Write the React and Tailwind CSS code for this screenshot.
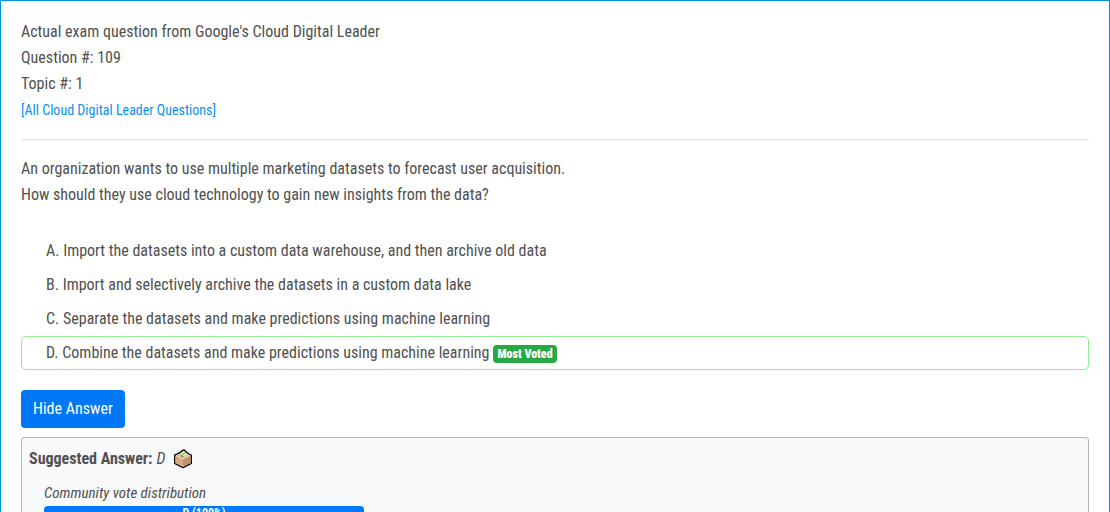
const choices = [
  { letter: 'A', text: 'Import the datasets into a custom data warehouse, and then archive old data' },
  { letter: 'B', text: 'Import and selectively archive the datasets in a custom data lake' },
  { letter: 'C', text: 'Separate the datasets and make predictions using machine learning' },
  { letter: 'D', text: 'Combine the datasets and make predictions using machine learning', mostVoted: true },
];

function VoteBoxIcon() {
  return (
    <svg viewBox="0 0 20 20" className="h-5 w-5" aria-hidden="true">
      <path d="M1.7 6.2 7 3.7 9 1.7 11.2 .9 14 3.8l4.3 2.4v8.3L10 18.7l-8.3-4.2Z" fill="#deb99a" stroke="#000" strokeWidth="1.3" strokeLinejoin="round" />
      <path d="m2.4 7.2 7.6 3.5v7.2l-7.6-3.8Z" fill="#d4a681" />
      <path d="m10 10.7 7.6-3.5v6.9L10 17.9Z" fill="#bf9070" />
      <path d="m2.4 6.6 7.6-3.2 7.6 3.2-7.6 3.6Z" fill="#e7c9b1" />
      <path d="m7.3 4.8 3.6-2.9 2.7 3.1-3.3 2.4Z" fill="#edf7df" />
      <path d="m8.6 4.8 1.2 1.1 2.2-2.4" fill="none" stroke="#78cf31" strokeWidth="1.2" />
      <path d="m7.5 6.6 3 1.3" fill="none" stroke="#50382b" strokeWidth="0.8" />
    </svg>
  );
}

export default function App() {
  return (
    <main className="h-screen overflow-hidden border border-b-0 border-[#0090e3] bg-white px-5 pt-[18px] font-['Roboto_Condensed','Liberation_Sans_Narrow',Roboto,sans-serif] text-base leading-[26px] text-[#505050]">
      <header className="border-b border-[#dfdfdf] pb-4">
        <div>Actual exam question from Google's Cloud Digital Leader</div>
        <div>Question #: 109</div>
        <div>Topic #: 1</div>
        <a href="#questions" className="block text-sm leading-[26px] text-[#0d90e8]">[All Cloud Digital Leader Questions]</a>
      </header>

      <section className="pt-4">
        <p>
          An organization wants to use multiple marketing datasets to forecast user acquisition.
          <br />
          How should they use cloud technology to gain new insights from the data?
        </p>
        <ul className="mt-[26px]">
          {choices.map((choice) => (
            <li
              key={choice.letter}
              className={
                choice.mostVoted
                  ? 'flex h-[34px] items-center gap-1 rounded-[5px] border border-[#90ee90] px-6'
                  : 'flex h-[34px] items-center border border-transparent px-6'
              }
            >
              <span>{choice.letter}. {choice.text}</span>
              {choice.mostVoted && (
                <span className="mt-0.5 rounded bg-[#28a745] px-1 text-xs leading-[18px] font-black text-white">Most Voted</span>
              )}
            </li>
          ))}
        </ul>
        <button type="button" className="mt-5 block rounded bg-[#0078f5] px-3 py-1.5 text-base leading-[26px] text-white">Hide Answer</button>
      </section>

      <section className="mt-[9px] rounded-[3px] border border-[#b5b5b5] bg-[#f8f9fb] px-[7px] pt-2 pb-6">
        <div className="flex items-center">
          <strong className="font-bold">Suggested Answer:</strong>
          <em className="ml-1">D</em>
          <span className="ml-2"><VoteBoxIcon /></span>
        </div>
        <div className="mt-2 px-[15px]">
          <div className="text-[15px] leading-[26px] italic">Community vote distribution</div>
          <div className="h-4 w-80 max-w-full rounded bg-[#007bff] text-center text-xs leading-[14px] font-bold text-white">D (100%)</div>
        </div>
      </section>
    </main>
  );
}
